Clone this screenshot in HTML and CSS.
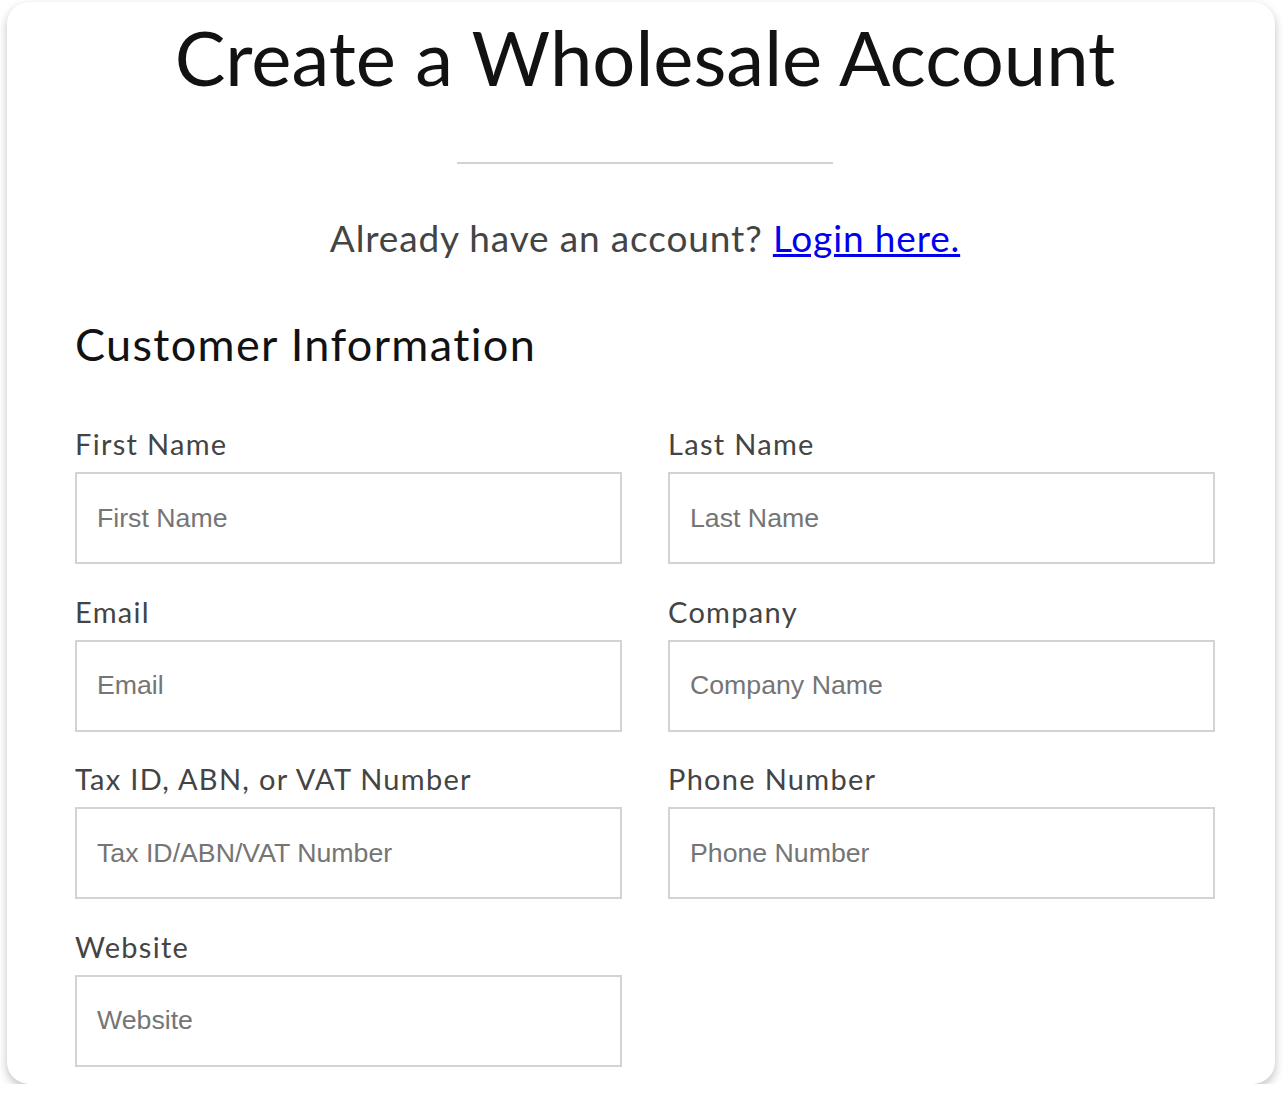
FILE: index.html
```html
<!DOCTYPE html>
<html lang="en">
<head>
  <meta charset="UTF-8" />
  <meta name="viewport" content="width=device-width, initial-scale=1.0"/>
  <title>Create a Wholesale Account</title>
  <link rel="stylesheet" href="styles.css">
</head>
<body>
  <div class="card">
    <h1 class="title">Create a Wholesale Account</h1>
    <hr class="divider">
    <p class="login-line">Already have an account? <a href="#">Login here.</a></p>

    <h2 class="section-title">Customer Information</h2>
    <form class="form-grid">
      <div class="field">
        <label for="first">First Name</label>
        <input type="text" id="first" placeholder="First Name" />
      </div>
      <div class="field">
        <label for="last">Last Name</label>
        <input type="text" id="last" placeholder="Last Name" />
      </div>
      <div class="field">
        <label for="email">Email</label>
        <input type="email" id="email" placeholder="Email" />
      </div>
      <div class="field">
        <label for="company">Company</label>
        <input type="text" id="company" placeholder="Company Name" />
      </div>
      <div class="field">
        <label for="tax">Tax ID, ABN, or VAT Number</label>
        <input type="text" id="tax" placeholder="Tax ID/ABN/VAT Number" />
      </div>
      <div class="field">
        <label for="phone">Phone Number</label>
        <input type="text" id="phone" placeholder="Phone Number" />
      </div>
      <div class="field">
        <label for="website">Website</label>
        <input type="text" id="website" placeholder="Website" />
      </div>
    </form>
  </div>
</body>
</html>
```

FILE: styles.css
```css
body {
  margin: 0;
  background: #fff;
  font-family: Lato, 'Noto Sans', sans-serif;
  color: #121212;
}

.card {
  margin: 2px 8px 0 7px;
  height: 1082px;
  box-sizing: border-box;
  background: #fff;
  border-radius: 22px;
  box-shadow: 0 4px 10px rgba(0,0,0,0.25);
  padding: 0 60px 0 68px;
}

.title {
  margin: 0;
  font-size: 76px;
  font-weight: 400;
  line-height: 110px;
  text-align: center;
  color: #121212;
}

.divider {
  width: 376px;
  height: 2px;
  border: 0;
  background: #d3d3d3;
  margin: 50px auto 0;
}

.login-line {
  margin: 49px 0 0;
  font-size: 37px;
  line-height: 50px;
  text-align: center;
  color: #444;
  letter-spacing: 0.85px;
}

.login-line a {
  color: #0000ee;
}

.section-title {
  margin: 51px 0 0;
  font-size: 45px;
  font-weight: 400;
  line-height: 60px;
  color: #121212;
  letter-spacing: 1.35px;
}

.form-grid {
  margin-top: 46px;
  display: grid;
  grid-template-columns: 1fr 1fr;
  column-gap: 46px;
  row-gap: 23.5px;
}

.field {
  display: flex;
  flex-direction: column;
  gap: 4px;
}

.field label {
  font-size: 29px;
  line-height: 48px;
  color: #444;
  letter-spacing: 1.3px;
}

.field input {
  height: 92px;
  box-sizing: border-box;
  border: 2px solid #d3d3d3;
  padding: 0 20px;
  font-family: 'Liberation Sans', Arial, sans-serif;
  font-size: 26.7px;
  color: #121212;
  background: #fff;
  outline: none;
}

.field input::placeholder {
  color: #757575;
}
```
